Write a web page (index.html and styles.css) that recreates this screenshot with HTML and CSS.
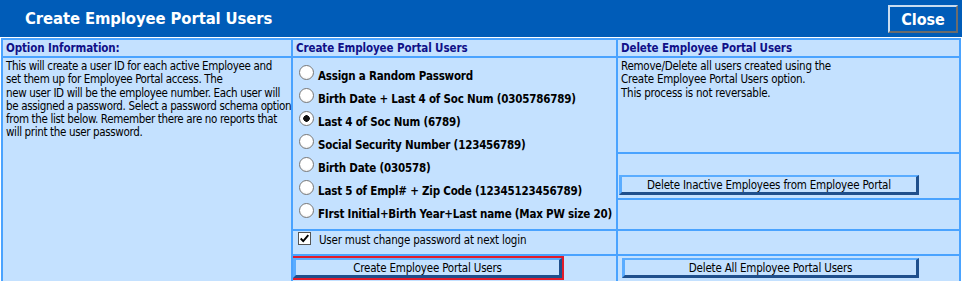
FILE: index.html
```html
<!DOCTYPE html>
<html lang="en">
<head>
    <meta charset="UTF-8">
    <title>Create Employee Portal Users</title>
    <link rel="stylesheet" href="styles.css">
</head>
<body>

    <div class="titlebar">
        <h1>Create Employee Portal Users</h1>
        <button class="close-btn">Close</button>
    </div>

    <table class="grid">
        <tr class="head-row">
            <th class="col-info">Option Information:</th>
            <th class="col-create">Create Employee Portal Users</th>
            <th class="col-delete">Delete Employee Portal Users</th>
        </tr>
        <tr class="r-text">
            <td rowspan="5" class="info">This will create a user ID for each active Employee and<br>set them up for Employee Portal access. The<br>new user ID will be the employee number. Each user will<br>be assigned a password. Select a password schema option<br>from the list below. Remember there are no reports that<br>will print the user password.</td>
            <td rowspan="3" class="options">
                <label class="opt"><input type="radio" name="schema"> Assign a Random Password</label>
                <label class="opt"><input type="radio" name="schema"> Birth Date + Last 4 of Soc Num (0305786789)</label>
                <label class="opt"><input type="radio" name="schema" checked> Last 4 of Soc Num (6789)</label>
                <label class="opt"><input type="radio" name="schema"> Social Security Number (123456789)</label>
                <label class="opt"><input type="radio" name="schema"> Birth Date (030578)</label>
                <label class="opt"><input type="radio" name="schema"> Last 5 of Empl# + Zip Code (12345123456789)</label>
                <label class="opt"><input type="radio" name="schema"> FIrst Initial+Birth Year+Last name (Max PW size 20)</label>
            </td>
            <td class="del-text">Remove/Delete all users created using the<br>Create Employee Portal Users option.<br>This process is not reversable.</td>
        </tr>
        <tr class="r-inactive">
            <td class="btn-cell"><button class="btn btn-inactive">Delete Inactive Employees from Employee Portal</button></td>
        </tr>
        <tr class="r-empty">
            <td></td>
        </tr>
        <tr class="r-check">
            <td><label class="chk"><input type="checkbox" checked> User must change password at next login</label></td>
            <td></td>
        </tr>
        <tr class="r-buttons">
            <td class="btn-cell"><div class="highlight"><button class="btn btn-create">Create Employee Portal Users</button></div></td>
            <td class="btn-cell"><button class="btn btn-delall">Delete All Employee Portal Users</button></td>
        </tr>
    </table>

</body>
</html>
```

FILE: styles.css
```css
* {
    box-sizing: border-box;
    margin: 0;
    padding: 0;
}

body {
    background: #ffffff;
    font-family: "DejaVu Sans Condensed", "DejaVu Sans", sans-serif;
    font-size: 11.5px;
    letter-spacing: -0.25px;
    color: #000;
}

/* Title bar */
.titlebar {
    display: flex;
    justify-content: space-between;
    align-items: center;
    height: 37px;
    background: #005cb8;
    padding: 0 4px 0 25px;
}

.titlebar h1 {
    color: #fff;
    font-size: 16.5px;
    letter-spacing: -0.1px;
    font-weight: bold;
}

.close-btn {
    width: 70px;
    height: 28px;
    margin-top: 1px;
    background: #005cb8;
    color: #fff;
    font-family: inherit;
    font-size: 16px;
    font-weight: bold;
    border: 2px solid;
    border-color: #c8dcf0 #6c6c6c #6c6c6c #c8dcf0;
}

/* Main grid */
.grid {
    width: 960px;
    margin: 1px 0 0 1px;
    border-collapse: collapse;
    table-layout: fixed;
    background: #c4e1ff;
}

.grid th,
.grid td {
    border: 2px solid #4aa3ff;
    vertical-align: top;
    text-align: left;
    padding: 1px 3px;
}

.grid th {
    color: #101088;
    font-weight: bold;
    font-size: 11.5px;
    letter-spacing: -0.1px;
    height: 18px;
}

.col-info { width: 290px; }
.col-create { width: 325px; }

.info {
    line-height: 13.3px;
    letter-spacing: -0.35px;
    white-space: nowrap;
    padding: 2px 0 0 3px !important;
}

.del-text {
    line-height: 13.3px;
    padding-top: 2px !important;
}

.r-text td.del-text { height: 96px; }
.r-inactive td { height: 46px; }
.r-empty td { height: 31px; }
.r-check td { height: 25px; }
.r-buttons td { height: 25px; }

/* Radio list */
.options {
    padding: 6px 0 0 6px !important;
}

.opt {
    display: flex;
    align-items: center;
    gap: 4px;
    height: 23px;
    font-weight: bold;
    font-size: 11.5px;
    letter-spacing: -0.2px;
    white-space: nowrap;
}

.opt input {
    appearance: none;
    flex: none;
    width: 15px;
    height: 15px;
    border: 1px solid #777;
    border-radius: 50%;
    background: radial-gradient(circle at 50% 40%, #fff 55%, #e4e4e4);
    position: relative;
    top: -3px;
}

.opt input:checked {
    background: radial-gradient(circle, #111 0 3px, #fff 3.5px);
}

/* Checkbox row */
.chk {
    display: flex;
    align-items: flex-end;
    gap: 8px;
    padding: 0 0 0 2px;
    letter-spacing: -0.2px;
}

.chk input {
    appearance: none;
    flex: none;
    width: 13px;
    height: 13px;
    border: 1px solid #555;
    background: #fff url("data:image/svg+xml;utf8,<svg xmlns='http://www.w3.org/2000/svg' viewBox='0 0 13 13'><path d='M2 6.5 L5 9.5 L11 2.5' fill='none' stroke='black' stroke-width='2.2'/></svg>") no-repeat center;
    margin-bottom: 2px;
}

/* Buttons */
.btn-cell {
    padding: 2px 1px !important;
}

.btn {
    height: 20px;
    background: #c4e1ff;
    font-family: inherit;
    font-size: 11.5px;
    letter-spacing: -0.2px;
    color: #000;
    border: 3px solid;
    border-color: #5aacff #1f4f8c #1f4f8c #5aacff;
    border-width: 2px 3px 3px 3px;
}

.r-inactive .btn-cell {
    padding-top: 21px !important;
}

.btn-inactive {
    width: 300px;
}

.btn-delall {
    width: 297px;
    margin-left: 3px;
}

.highlight {
    width: 273px;
    border: 2px solid #e21b2a;
    margin: -2px 0 0 -3px;
}

.btn-create {
    display: block;
    width: 100%;
}
```
